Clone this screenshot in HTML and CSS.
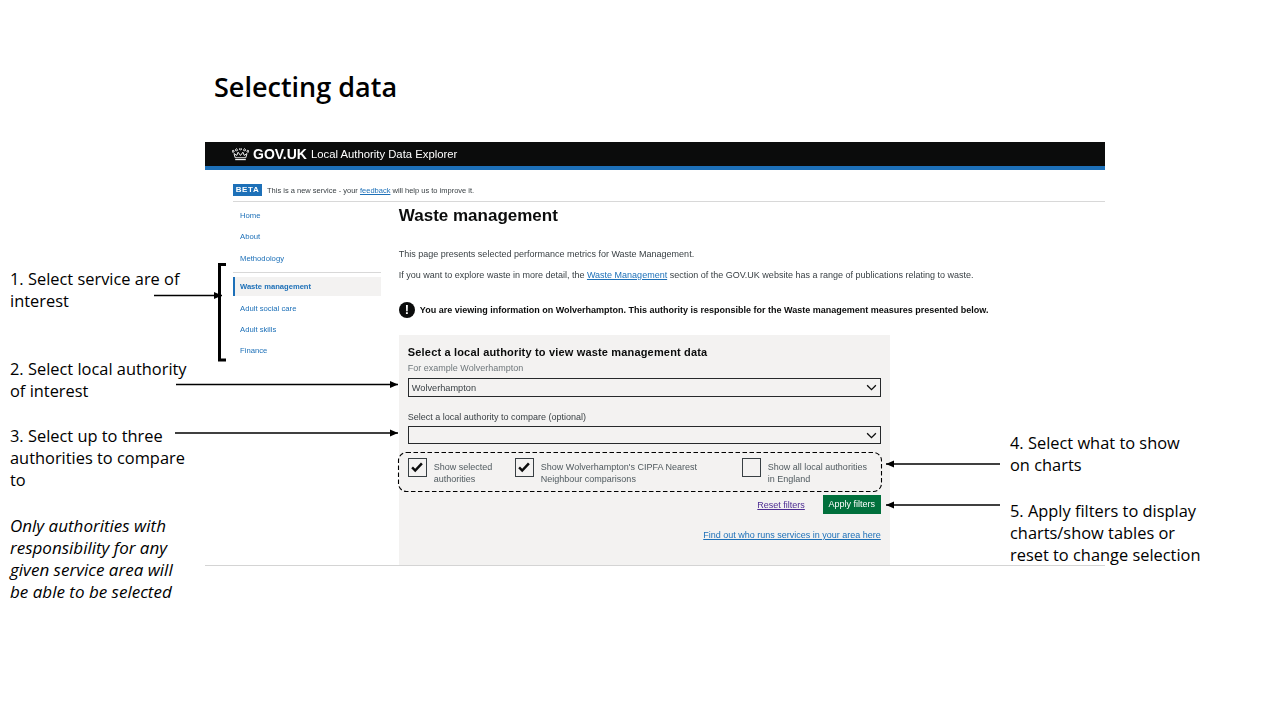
FILE: index.html
```html
<!DOCTYPE html>
<html lang="en">
<head>
<meta charset="utf-8">
<title>Selecting data</title>
<link rel="stylesheet" href="styles.css">
</head>
<body>
<main class="slide">
  <h1 class="slide-title">Selecting data</h1>

  <section class="shot">
    <header class="gov-header">
      <svg class="crown" viewBox="0 0 18 14" aria-hidden="true">
        <path d="M1 4.500a1 1 0 1 1 .01 0M4.600 3a1 1 0 1 1 .01 0M9 2a1 1 0 1 1 .01 0M13.400 3a1 1 0 1 1 .01 0M17 4.500a1 1 0 1 1 .01 0" fill="none" stroke="#fff" stroke-width="1"/>
        <path d="M2 6l1.300 4.500h11.400L16 6l-3 2-1.400-3.500L9 8 6.400 4.500 5 8z" fill="none" stroke="#fff" stroke-width="1"/>
        <path d="M3.300 12.500h11.400" stroke="#fff" stroke-width="1.200"/>
      </svg>
      <span class="gov-logo">GOV.UK</span>
      <span class="gov-service">Local Authority Data Explorer</span>
    </header>
    <div class="gov-stripe"></div>

    <div class="shot-body">
      <div class="beta">
        <span class="beta-tag">BETA</span>
        <span>This is a new service - your <a class="link">feedback</a> will help us to improve it.</span>
      </div>

      <div class="columns">
        <nav class="side">
          <a class="side-link">Home</a>
          <a class="side-link">About</a>
          <a class="side-link">Methodology</a>
          <div class="side-rule"></div>
          <a class="side-link side-current">Waste management</a>
          <a class="side-link">Adult social care</a>
          <a class="side-link">Adult skills</a>
          <a class="side-link">Finance</a>
        </nav>

        <div class="content">
          <h2 class="page-title">Waste management</h2>
          <p class="intro">This page presents selected performance metrics for Waste Management.</p>
          <p class="intro">If you want to explore waste in more detail, the <a class="link">Waste Management</a> section of the GOV.UK website has a range of publications relating to waste.</p>
          <div class="notice">
            <span class="notice-icon">!</span>
            <strong>You are viewing information on Wolverhampton. This authority is responsible for the Waste management measures presented below.</strong>
          </div>

          <form class="filters">
            <div class="filters-title">Select a local authority to view waste management data</div>
            <div class="hint">For example Wolverhampton</div>
            <div class="select">
              <span>Wolverhampton</span>
              <svg class="chev" viewBox="0 0 12 8" aria-hidden="true"><path d="M1 1.500l5 5 5-5" fill="none" stroke="#0b0c0c" stroke-width="1.500"/></svg>
            </div>
            <div class="label">Select a local authority to compare (optional)</div>
            <div class="select select-tight">
              <span></span>
              <svg class="chev" viewBox="0 0 12 8" aria-hidden="true"><path d="M1 1.500l5 5 5-5" fill="none" stroke="#0b0c0c" stroke-width="1.500"/></svg>
            </div>
            <div class="checks">
              <div class="check check-a">
                <span class="box"><svg viewBox="0 0 18 18" aria-hidden="true"><path d="M3.500 9.500l3.500 3.500 7.500-8" fill="none" stroke="#0b0c0c" stroke-width="2.800"/></svg></span>
                <span class="check-text">Show selected<br>authorities</span>
              </div>
              <div class="check check-b">
                <span class="box"><svg viewBox="0 0 18 18" aria-hidden="true"><path d="M3.500 9.500l3.500 3.500 7.500-8" fill="none" stroke="#0b0c0c" stroke-width="2.800"/></svg></span>
                <span class="check-text">Show Wolverhampton's CIPFA Nearest<br>Neighbour comparisons</span>
              </div>
              <div class="check check-c">
                <span class="box"></span>
                <span class="check-text">Show all local authorities<br>in England</span>
              </div>
            </div>
            <div class="actions">
              <a class="reset">Reset filters</a>
              <span class="apply">Apply filters</span>
            </div>
            <a class="link find">Find out who runs services in your area here</a>
          </form>
        </div>
      </div>
    </div>
  </section>

  <svg class="overlay" viewBox="0 0 1280 720" aria-hidden="true">
    <defs>
      <marker id="head" viewBox="0 0 8 8" refX="8" refY="4" markerWidth="8" markerHeight="8" markerUnits="userSpaceOnUse" orient="auto">
        <path d="M0 0.500L8 4 0 7.500z" fill="#000"/>
      </marker>
    </defs>
    <rect x="398.500" y="452.500" width="483" height="39" rx="8" fill="none" stroke="#000" stroke-width="1.100" stroke-dasharray="4.500 2.500"/>
    <path d="M226 264.500h-6.500v95.500h6.500" fill="none" stroke="#000" stroke-width="3"/>
    <path d="M154 295.500h68" stroke="#000" stroke-width="1.700" marker-end="url(#head)"/>
    <path d="M176 384.500h222" stroke="#000" stroke-width="1.700" marker-end="url(#head)"/>
    <path d="M175 433h223" stroke="#000" stroke-width="1.700" marker-end="url(#head)"/>
    <path d="M1000 464h-114" stroke="#000" stroke-width="1.700" marker-end="url(#head)"/>
    <path d="M1000 505h-114" stroke="#000" stroke-width="1.700" marker-end="url(#head)"/>
  </svg>

  <p class="note note-1">1. Select service are of<br>interest</p>
  <p class="note note-2">2. Select local authority<br>of interest</p>
  <p class="note note-3">3. Select up to three<br>authorities to compare<br>to</p>
  <p class="note note-i"><em>Only authorities with<br>responsibility for any<br>given service area will<br>be able to be selected</em></p>
  <p class="note note-4">4. Select what to show<br>on charts</p>
  <p class="note note-5">5. Apply filters to display<br>charts/show tables or<br>reset to change selection</p>
</main>
</body>
</html>
```

FILE: styles.css
```css
* { box-sizing: border-box; }
html, body { margin: 0; padding: 0; background: #fff; }
body { font-family: "Liberation Sans", Arial, sans-serif; color: #0b0c0c; }
.slide { position: relative; width: 1280px; height: 720px; overflow: hidden; background: #fff; }
.slide-title { position: absolute; left: 214px; top: 67px; margin: 0; font: 600 27px/40px "Open Sans", sans-serif; color: #000; }

.shot { position: absolute; left: 205px; top: 142px; width: 900px; height: 424px; border-bottom: 1px solid #d4d4d4; overflow: hidden; filter: blur(.4px); }
.gov-header { height: 24px; background: #0b0c0c; color: #fff; display: flex; align-items: center; padding-left: 27px; }
.crown { width: 17px; height: 13px; margin-right: 4px; }
.gov-logo { font-size: 14px; font-weight: 700; margin-right: 4px; }
.gov-service { font-size: 11.300px; }
.gov-stripe { height: 4px; background: #1d70b8; }
.shot-body { padding: 0 0 0 28px; }

.beta { height: 32px; border-bottom: 1px solid #d8d8d8; display: flex; align-items: center; gap: 5px; font-size: 7.500px; color: #383f43; padding-top: 14px; padding-bottom: 5px; }
.beta-tag { background: #1d70b8; color: #fff; font-size: 8px; font-weight: 700; letter-spacing: .6px; padding: 1px 0; width: 29px; height: 12px; line-height: 10px; text-align: center; }
.link { color: #1d70b8; text-decoration: underline; }

.columns { display: flex; }
.side { width: 148px; margin-right: 18px; padding-top: 3px; display: flex; flex-direction: column; }
.side-link { display: block; height: 21.300px; line-height: 21px; font-size: 7.700px; color: #1d70b8; padding-left: 7px; }
.side-rule { height: 1px; background: #d8d8d8; margin: 3px 0 4px; }
.side-current { background: #f3f2f1; border-left: 2px solid #1d70b8; padding-left: 5px; font-weight: 700; height: 19px; line-height: 19px; margin-bottom: 2px; font-size: 7.600px; }

.content { width: 707px; }
.page-title { margin: 3px 0 0; font-size: 17px; line-height: 21px; font-weight: 700; }
.intro { margin: 0; font-size: 9px; line-height: 21px; color: #383f43; }
.page-title + .intro { margin-top: 18px; }
.notice { display: flex; align-items: center; gap: 5px; margin-top: 15px; font-size: 9px; height: 18px; color: #0b0c0c; }
.notice-icon { width: 16px; height: 16px; border-radius: 50%; background: #0b0c0c; color: #fff; font-size: 13px; font-weight: 700; line-height: 16px; text-align: center; flex: none; }

.filters { margin-top: 16px; width: 491px; height: 240px; background: #f3f2f1; padding: 10px 9px 0 9px; display: flex; flex-direction: column; }
.filters-title { font-size: 11px; font-weight: 700; line-height: 14px; letter-spacing: .17px; }
.hint { font-size: 9px; line-height: 12px; color: #6f777b; margin-top: 3px; }
.select { height: 19px; border: 1.500px solid #26292b; margin-top: 4px; display: flex; align-items: center; justify-content: space-between; padding: 0 3px; font-size: 9.200px; color: #383f43; flex: none; }
.select-tight { margin-top: 3px; height: 18px; }
.chev { width: 11px; height: 7px; }
.label { font-size: 9px; line-height: 12px; color: #383f43; margin-top: 14px; }
.checks { display: flex; margin-top: 14px; height: 26px; font-size: 9px; line-height: 12px; color: #505a5f; flex: none; }
.check { display: flex; gap: 7px; }
.check-a { width: 107px; }
.check-b { width: 227px; }
.box { width: 19px; height: 19px; border: 1.500px solid #383f43; flex: none; }
.box svg { display: block; width: 16px; height: 16px; }
.check-text { padding-top: 3px; }
.actions { display: flex; justify-content: flex-end; align-items: center; gap: 18px; margin-top: 11px; height: 19px; flex: none; }
.reset { font-size: 9px; color: #4c2c92; text-decoration: underline; }
.apply { width: 58px; height: 19px; background: #00703c; color: #fff; font-size: 9px; line-height: 18px; text-align: center; }
.find { font-size: 9px; text-align: right; margin-top: 15px; line-height: 12px; }

.overlay { position: absolute; left: 0; top: 0; width: 1280px; height: 720px; pointer-events: none; }

.note { position: absolute; margin: 0; font: 400 16.400px/22px "Open Sans", sans-serif; color: #000; }
.note-1 { left: 10px; top: 268px; }
.note-2 { left: 10px; top: 358px; }
.note-3 { left: 10px; top: 425px; }
.note-i { left: 10px; top: 515px; font-size: 17px; }
.note-4 { left: 1010px; top: 432px; }
.note-5 { left: 1010px; top: 500px; }
```
